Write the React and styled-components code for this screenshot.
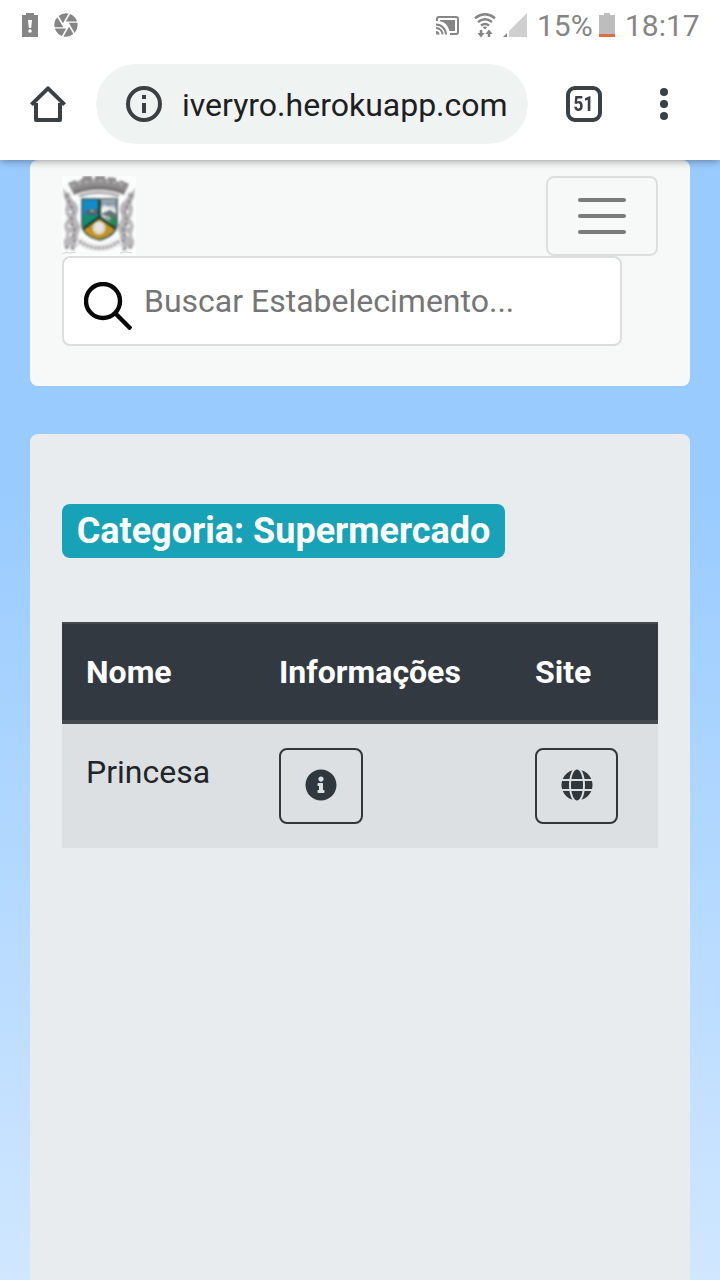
import React from 'react';
import styled, { createGlobalStyle } from 'styled-components';
import { FaInfoCircle, FaGlobe } from 'react-icons/fa';
import { MdCamera } from 'react-icons/md';

const GlobalStyle = createGlobalStyle`
  *, *::before, *::after { box-sizing: border-box; }
  body { margin: 0; font-family: Roboto, "Liberation Sans", sans-serif; color: #212529; }
`;

const Screen = styled.div`
  display: flex;
  flex-direction: column;
  width: 720px;
  height: 1280px;
  overflow: hidden;
  background: #fff;
`;

const StatusBar = styled.header`
  display: flex;
  align-items: center;
  justify-content: space-between;
  height: 48px;
  padding: 2px 19px 0 21px;
  color: #858585;
  font-size: 30px;
`;

const StatusGroup = styled.div`
  display: flex;
  align-items: center;
`;

const StatusIcon = styled.span`
  display: flex;
  margin-left: ${({ $gap }) => $gap || 0}px;
`;

const StatusText = styled.span`
  width: ${({ $width }) => $width}px;
  margin-left: ${({ $gap }) => $gap || 0}px;
  padding-top: 2px;
  line-height: 48px;
  white-space: nowrap;
`;

const BrowserBar = styled.div`
  display: flex;
  align-items: center;
  flex: none;
  z-index: 1;
  height: 112px;
  padding: 0 50px 0 28px;
  background: #fff;
  box-shadow: 0 1px 8px rgba(0, 0, 0, 0.4);
  clip-path: inset(0 0 -16px 0);
  color: #3a4043;
`;

const AddressBar = styled.div`
  display: flex;
  align-items: center;
  gap: 18px;
  width: 432px;
  height: 80px;
  margin-left: 28px;
  padding-left: 28px;
  border-radius: 40px;
  background: #eff3f2;
`;

const Url = styled.span`
  padding-top: 2px;
  color: #1d2022;
  font-size: 32px;
  line-height: 40px;
  white-space: nowrap;
`;

const TabCounter = styled.button`
  display: flex;
  align-items: center;
  justify-content: center;
  width: 36px;
  height: 36px;
  margin-left: 38px;
  padding: 0;
  border: 4px solid #3a4043;
  border-radius: 9px;
  background: none;
  color: inherit;
  font: 800 20px Roboto, sans-serif;
`;

const TabCount = styled.span`
  display: block;
  transform: scaleX(0.86);
`;

const MenuDots = styled.div`
  display: flex;
  flex-direction: column;
  gap: 4px;
  margin-left: 58px;
`;

const Dot = styled.i`
  width: 8px;
  height: 8px;
  border-radius: 50%;
  background: #3a4043;
`;

const Page = styled.main`
  display: flex;
  flex-direction: column;
  flex: 1;
  gap: 48px;
  padding: 0 30px;
  background: linear-gradient(#99cbff 0, #99cbff 330px, #d0e7ff 1120px);
`;

const Navbar = styled.nav`
  flex: none;
  height: 226px;
  padding: 16px 32px;
  border-radius: 8px;
  background: #f7f9f8;
`;

const NavTop = styled.div`
  display: flex;
  justify-content: space-between;
  height: 80px;
`;

const Toggler = styled.button`
  display: flex;
  flex-direction: column;
  align-items: center;
  justify-content: center;
  gap: 12px;
  width: 112px;
  height: 80px;
  padding: 0;
  border: 2px solid #dddede;
  border-radius: 8px;
  background: none;
`;

const TogglerLine = styled.span`
  width: 48px;
  height: 4px;
  border-radius: 2px;
  background: #7b7c7c;
`;

const SearchField = styled.label`
  display: flex;
  align-items: center;
  gap: 12px;
  width: 560px;
  height: 90px;
  padding-left: 20px;
  border: 2px solid #dcdddd;
  border-radius: 8px;
  background: #fff;
`;

const SearchIcon = styled.svg`
  margin-top: 10px;
`;

const Placeholder = styled.span`
  color: #757575;
  font-size: 32px;
  white-space: nowrap;
`;

const Panel = styled.section`
  flex: 1;
  padding: 70px 32px 0;
  border-radius: 8px 8px 0 0;
  background: #e8ecef;
`;

const CategoryBadge = styled.h1`
  display: flex;
  align-items: center;
  justify-content: center;
  width: 443px;
  height: 54px;
  margin: 0 0 64px;
  border-radius: 8px;
  background: #17a2b8;
  color: #fff;
  font-size: 36px;
  font-weight: 700;
  line-height: 54px;
  white-space: nowrap;
`;

const Table = styled.div`
  width: 596px;
  font-size: 32px;
`;

const Row = styled.div`
  display: grid;
  grid-template-columns: 193px 256px 1fr;
  align-items: start;
  height: ${({ $head }) => ($head ? 102 : 124)}px;
  padding: 24px 0 0 24px;
  background: ${({ $head }) => ($head ? '#333940' : '#dce0e3')};
  color: ${({ $head }) => ($head ? '#fff' : '#212529')};
  font-weight: ${({ $head }) => ($head ? 700 : 400)};
  line-height: 48px;
  ${({ $head }) => $head && 'border-top: 2px solid #434b51; border-bottom: 4px solid #434b51;'}
`;

const ActionButton = styled.button`
  display: flex;
  width: ${({ $width }) => $width}px;
  height: 76px;
  padding: 19px 0 0 24px;
  border: 2px solid #30373d;
  border-radius: 8px;
  background: none;
  color: #30373d;
  font-size: 32px;
`;

const CrestArt = styled.g`
  filter: blur(0.8px);
`;

const BatteryAlert = () => (
  <svg width="18" height="24" viewBox="0 0 18 24">
    <path d="M1 2H5V0H13V2H17V24H1Z" fill="#858585" />
    <path d="M7 7H11L10.2 15H7.8Z" fill="#fff" />
    <circle cx="9" cy="18" r="1.8" fill="#fff" />
  </svg>
);

const CastIcon = () => (
  <svg width="23" height="19" viewBox="0 0 23 19" fill="none" stroke="#858585" strokeWidth="2">
    <path d="M1 5V3Q1 1 3 1H20Q22 1 22 3V16Q22 18 20 18H14" />
    <path d="M4 4H19V15H13.5Q11.5 6.5 4 5.2Z" fill="#858585" stroke="none" />
    <path d="M0 8.5A10 10 0 0 1 10 18.5M0 12A6.5 6.5 0 0 1 6.5 18.5" />
    <path d="M0 15A3.5 3.5 0 0 1 3.5 18.5H0Z" fill="#858585" stroke="none" />
  </svg>
);

const WifiIcon = () => (
  <svg width="22" height="25" viewBox="0 0 22 25" fill="none" stroke="#858585" strokeWidth="2.5">
    <path d="M1 5.2Q11 -2.6 21 5.2M4 9Q11 3.6 18 9M7 12.5Q11 9.4 15 12.5" />
    <path d="M8.8 14.2Q11 12.8 13.2 14.2L11 16.5Z" fill="#858585" stroke="none" />
    <path d="M7 17V22M15 24V19" />
    <path d="M3.4 20H10.6L7 24.5ZM11.4 21H18.6L15 16.5Z" fill="#858585" stroke="none" />
  </svg>
);

const SignalIcon = () => (
  <svg width="24" height="24" viewBox="0 0 24 24">
    <path d="M24 0V24H6V18Z" fill="#cfcfcf" />
    <path d="M4 20V24H0Z" fill="#858585" />
  </svg>
);

const BatteryIcon = () => (
  <svg width="16" height="24" viewBox="0 0 16 24">
    <path d="M0 2H5V0H11V2H16V21H0Z" fill="#bdbdbd" />
    <path d="M0 21H16V24H0Z" fill="#dc6d48" />
  </svg>
);

const HomeIcon = () => (
  <svg width="40" height="40" viewBox="0 0 40 40" fill="none" stroke="#3a4043" strokeWidth="4" strokeLinejoin="round">
    <path d="M3.4 20.6L20 4.4L36.6 20.6" />
    <path d="M8 19V36H32V19" />
  </svg>
);

const SiteInfoIcon = () => (
  <svg width="40" height="40" viewBox="0 0 40 40">
    <circle cx="20" cy="20" r="16" fill="none" stroke="#3a4043" strokeWidth="4" />
    <path d="M18 11H22V15H18ZM18 19H22V29H18Z" fill="#3a4043" />
  </svg>
);

const CoatOfArms = () => (
  <svg width="74" height="80" viewBox="0 0 74 80">
    <path d="M0 0H74V80H0Z" fill="#fbfcfc" />
    <CrestArt>
      <path d="M6 7L14 4V6L17 5L21 2V0H30V3H33V0H43V3H46V1L54 2V5L58 6V4L67 8L62 19Q37 9 12 19Z" fill="#8f8d8e" />
      <path d="M9 10Q37 0 64 10" fill="none" stroke="#b5b3b4" strokeWidth="2" strokeDasharray="4 3" />
      <path d="M12 16Q37 7 62 16" fill="none" stroke="#777576" strokeWidth="2.5" />
      <path d="M17 20Q37 13 57 20" fill="none" stroke="#b0aeaf" strokeWidth="3" />
      <path d="M1 11Q3 17 8 17Q8 23 13 26Q17 30 16 36Q13 40 16 46Q20 51 17 56Q14 63 18 68Q12 74 7 69Q1 73 2 64Q6 59 3 54Q1 47 6 43Q3 38 3 32Q6 27 2 22Z" fill="#b9b7b9" />
      <path d="M73 11Q71 17 66 17Q66 23 61 26Q57 30 58 36Q61 40 58 46Q54 51 57 56Q60 63 56 68Q62 74 67 69Q73 73 72 64Q68 59 71 54Q73 47 68 43Q71 38 71 32Q68 27 72 22Z" fill="#b9b7b9" />
      <path d="M4 18Q7 24 8 29Q13 34 10 40Q8 47 13 53Q10 59 13 66M70 18Q67 24 66 29Q61 34 64 40Q66 47 61 53Q64 59 61 66" fill="none" stroke="#8b898c" strokeWidth="2.4" strokeDasharray="4 2" />
      <path d="M7 35L10 37M6 49L9 51M7 60L10 57M67 35L64 37M68 49L65 51M67 60L64 57" stroke="#eeedef" strokeWidth="2.5" />
      <path d="M3 72Q8 69 13 74M61 74Q66 69 72 72" fill="none" stroke="#969496" strokeWidth="3" strokeDasharray="4 2" />
      <path d="M16 64Q26 71 37 71Q49 71 58 64" fill="none" stroke="#f5f4f5" strokeWidth="9" />
      <path d="M17 65Q27 72 37 72Q49 72 57 65" fill="none" stroke="#aeadaf" strokeWidth="4" strokeDasharray="3 1" />
      <path d="M20 23H55V49Q53 60 37.5 64Q21 60 20 49Z" fill="#c8921c" />
      <path d="M20 23H37V41L20 53Z" fill="#128bc8" />
      <path d="M38 23H55V53L38 41Z" fill="#c3cdd3" />
      <path d="M20 40L29 38L37 40L20 54Z" fill="#118d70" />
      <path d="M22 38L26 33L30 36L34 32L37 37L33 40Z" fill="#42657e" />
      <path d="M29 33L34 36H28Z" fill="#d99143" />
      <path d="M39 25H54V31L50 29L46 31L42 28L39 31Z" fill="#8b9ba6" />
      <path d="M39 32L45 30L49 32L54 34V37L47 35L39 38Z" fill="#edf1f4" />
      <path d="M39 38L48 34L54 38V48L48 41Z" fill="#64726f" />
      <path d="M43 41L49 44L48 40L55 43V54Z" fill="#29895b" />
      <circle cx="37" cy="52" r="7.5" fill="#ded4b5" stroke="#a27f32" />
      <path d="M33 48Q37 45 41 48V53L37 57L33 53Z" fill="#e9e4e8" />
      <path d="M37.5 24V41M21 53L37.5 41L54 53" fill="none" stroke="#1d3c28" strokeWidth="2.6" />
      <path d="M20 23H55V49Q53 60 37.5 64Q21 60 20 49Z" fill="none" stroke="#3f5958" strokeWidth="1.6" />
    </CrestArt>
    <path d="M0 78Q4 75 8 77L14 76M58 77L64 76L70 77" fill="none" stroke="#d3d3d3" />
  </svg>
);

export default function App() {
  return (
    <Screen>
      <GlobalStyle />
      <StatusBar>
        <StatusGroup>
          <BatteryAlert />
          <StatusIcon $gap={13}><MdCamera size={28} /></StatusIcon>
        </StatusGroup>
        <StatusGroup>
          <StatusIcon><CastIcon /></StatusIcon>
          <StatusIcon $gap={15}><WifiIcon /></StatusIcon>
          <StatusIcon $gap={7}><SignalIcon /></StatusIcon>
          <StatusText $gap={10} $width={56}>15%</StatusText>
          <StatusIcon $gap={6}><BatteryIcon /></StatusIcon>
          <StatusText $gap={10} $width={76}>18:17</StatusText>
        </StatusGroup>
      </StatusBar>
      <BrowserBar>
        <HomeIcon />
        <AddressBar>
          <SiteInfoIcon />
          <Url>iveryro.herokuapp.com</Url>
        </AddressBar>
        <TabCounter><TabCount>51</TabCount></TabCounter>
        <MenuDots><Dot /><Dot /><Dot /></MenuDots>
      </BrowserBar>
      <Page>
        <Navbar>
          <NavTop>
            <CoatOfArms />
            <Toggler aria-label="Menu"><TogglerLine /><TogglerLine /><TogglerLine /></Toggler>
          </NavTop>
          <SearchField>
            <SearchIcon width="48" height="48" viewBox="0 0 48 48" fill="none" stroke="#080808" strokeWidth="4.4">
              <circle cx="19" cy="19" r="17" />
              <path d="M31 31L47 47" />
            </SearchIcon>
            <Placeholder>Buscar Estabelecimento...</Placeholder>
          </SearchField>
        </Navbar>
        <Panel>
          <CategoryBadge>Categoria: Supermercado</CategoryBadge>
          <Table>
            <Row $head>
              <span>Nome</span><span>Informações</span><span>Site</span>
            </Row>
            <Row>
              <span>Princesa</span>
              <ActionButton $width={84} aria-label="Informações"><FaInfoCircle /></ActionButton>
              <ActionButton $width={83} aria-label="Site"><FaGlobe /></ActionButton>
            </Row>
          </Table>
        </Panel>
      </Page>
    </Screen>
  );
}
